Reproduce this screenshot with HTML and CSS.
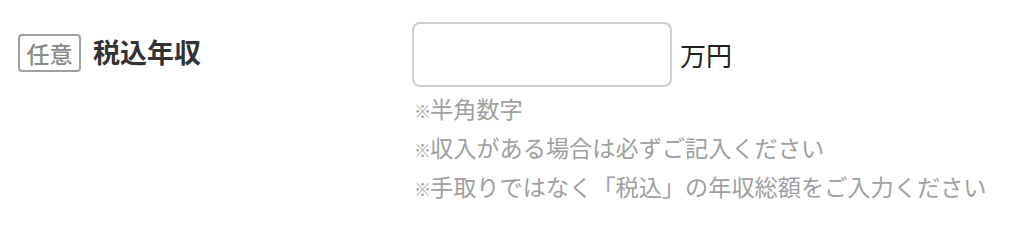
FILE: index.html
```html
<!DOCTYPE html>
<html lang="ja">
<head>
    <meta charset="UTF-8">
    <meta name="viewport" content="width=device-width, initial-scale=1.0">
    <title>税込年収</title>
    <link rel="stylesheet" href="styles.css">
</head>
<body>
    <div class="form-row">
        <div class="form-label">
            <span class="badge">任意</span>
            <label for="income">税込年収</label>
        </div>
        <div class="form-field">
            <div class="input-line">
                <input type="text" id="income" inputmode="numeric">
                <span class="unit">万円</span>
            </div>
            <ul class="notes">
                <li><span class="mark">※</span>半角数字</li>
                <li><span class="mark">※</span>収入がある場合は必ずご記入ください</li>
                <li><span class="mark">※</span>手取りではなく「税込」の年収総額をご入力ください</li>
            </ul>
        </div>
    </div>
</body>
</html>
```

FILE: styles.css
```css
* {
    margin: 0;
    padding: 0;
    box-sizing: border-box;
    font-family: 'Noto Sans CJK JP', 'Noto Sans', sans-serif;
}

body {
    background-color: #fff;
    color: #333;
}

.form-row {
    display: flex;
    padding: 22px 0 0 18px;
}

.form-label {
    width: 394px;
    display: flex;
    align-items: flex-start;
    gap: 12px;
    padding-top: 12px;
}

.badge {
    display: inline-flex;
    align-items: center;
    justify-content: center;
    width: 63px;
    height: 38px;
    border: 2px solid #a0a0a0;
    border-radius: 4px;
    color: #8a8a8a;
    font-size: 23px;
    font-weight: 500;
    line-height: 1;
}

.form-label label {
    font-size: 27px;
    font-weight: 700;
    line-height: 36px;
    color: #333;
}

.input-line {
    display: flex;
    align-items: center;
    gap: 8px;
}

.input-line input {
    width: 260px;
    height: 65px;
    border: 2px solid #cfcfcf;
    border-radius: 8px;
    font-size: 22px;
    padding: 0 12px;
    outline: none;
}

.unit {
    font-size: 26px;
    color: #222;
}

.notes {
    list-style: none;
    margin-top: 3px;
    padding-left: 2px;
}

.notes li {
    font-size: 23.2px;
    line-height: 37px;
    color: #a0a0a0;
}

.notes .mark {
    font-size: 17px;
    display: inline-block;
    width: 16px;
}
```
